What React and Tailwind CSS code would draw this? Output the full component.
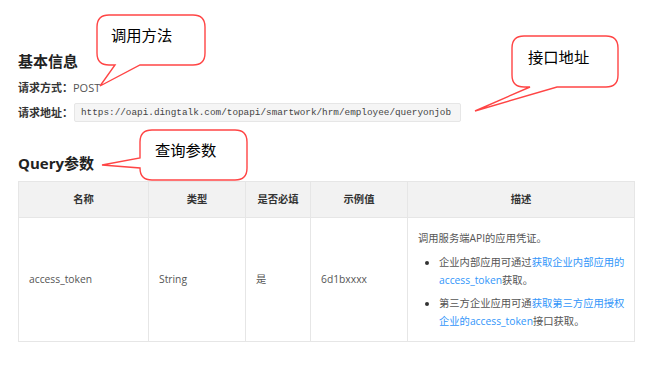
const font = { fontFamily: '"Open Sans", "Noto Sans CJK SC", sans-serif' };

function Callouts() {
  return (
    <>
      <svg className="absolute inset-0 pointer-events-none" width="655" height="366" viewBox="0 0 655 366">
        <g fill="#ffffff" stroke="#ff4545" strokeWidth="1.4" strokeLinejoin="miter">
          <path d="M109,15 H193 Q205,15 205,27 V53 Q205,65 193,65 H140 L100,86 L115,65 H109 Q97,65 97,53 V27 Q97,15 109,15 Z" />
          <path d="M524,36 H606 Q618,36 618,48 V75 Q618,87 606,87 H557 L475,111 L530,87 H524 Q512,87 512,75 V48 Q512,36 524,36 Z" />
          <path d="M152,130 H235 Q247,130 247,142 V168 Q247,180 235,180 H152 Q140,180 140,168 L102,165 L140,158 V142 Q140,130 152,130 Z" />
        </g>
      </svg>
      <span className="absolute left-[111px] top-[25px] text-[15.3px] leading-[20px] text-black" style={font}>调用方法</span>
      <span className="absolute left-[528px] top-[47px] text-[15.3px] leading-[20px] text-black" style={font}>接口地址</span>
      <span className="absolute left-[155px] top-[140px] text-[15.3px] leading-[20px] text-black" style={font}>查询参数</span>
    </>
  );
}

export default function App() {
  return (
    <div className="relative w-[655px] h-[366px] overflow-hidden bg-white pl-[18px] pt-[51px]" style={font}>
      <h2 className="text-[15px] leading-[20px] font-bold text-[#222]">基本信息</h2>
      <p className="mt-[8px] text-[11px] leading-[18px] text-[#555]">
        <span className="font-semibold text-[#333]">请求方式：</span>POST
      </p>
      <div className="mt-[6px] flex items-center text-[11px] leading-[19px]">
        <span className="font-semibold text-[#333] w-[56px]">请求地址：</span>
        <code className="h-[19px] w-[387px] px-[6px] bg-[#f5f5f5] border border-[#e6e6e6] rounded-[2px] text-[9.35px] leading-[17px] text-[#444] whitespace-nowrap" style={{ fontFamily: '"Liberation Mono", monospace' }}>
          https://oapi.dingtalk.com/topapi/smartwork/hrm/employee/queryonjob
        </code>
      </div>
      <h2 className="mt-[31px] text-[15px] leading-[20px] font-bold text-[#222]">Query参数</h2>
      <table className="mt-[8px] w-[616px] table-fixed border-collapse text-[10.3px] text-[#555]">
        <colgroup>
          <col className="w-[130px]" />
          <col className="w-[97px]" />
          <col className="w-[65px]" />
          <col className="w-[97px]" />
          <col className="w-[227px]" />
        </colgroup>
        <thead>
          <tr className="h-[36px] bg-[#f2f2f2] text-[#333] font-bold">
            <th className="border border-[#e6e6e6]">名称</th>
            <th className="border border-[#e6e6e6]">类型</th>
            <th className="border border-[#e6e6e6]">是否必填</th>
            <th className="border border-[#e6e6e6]">示例值</th>
            <th className="border border-[#e6e6e6]">描述</th>
          </tr>
        </thead>
        <tbody>
          <tr className="h-[124px]">
            <td className="border border-[#e6e6e6] px-[10px]">access_token</td>
            <td className="border border-[#e6e6e6] px-[10px]">String</td>
            <td className="border border-[#e6e6e6] px-[10px]">是</td>
            <td className="border border-[#e6e6e6] px-[10px]">6d1bxxxx</td>
            <td className="border border-[#e6e6e6] pl-[10px] pr-[4px] leading-[18px]">
              <p>调用服务端API的应用凭证。</p>
              <ul className="mt-[6px] pl-[21px] list-disc marker:text-[#333]">
                <li>
                  企业内部应用可通过<span className="text-[#3296fa]">获取企业内部应用的access_token</span>获取。
                </li>
                <li className="mt-[5px]">
                  第三方企业应用可通<span className="text-[#3296fa]">获取第三方应用授权企业的access_token</span>接口获取。
                </li>
              </ul>
            </td>
          </tr>
        </tbody>
      </table>
      <Callouts />
    </div>
  );
}
